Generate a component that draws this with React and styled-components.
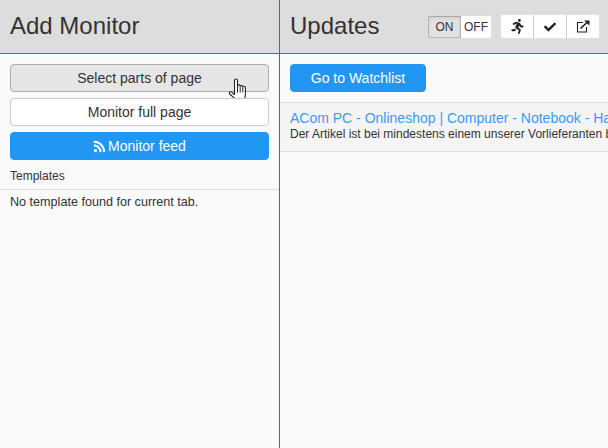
import React from 'react';
import styled, { createGlobalStyle } from 'styled-components';
import { FaRss, FaRunning, FaCheck } from 'react-icons/fa';

const GlobalStyle = createGlobalStyle`
	html, body {
		margin: 0;
		padding: 0;
		height: 100%;
		overflow: hidden;
		background: #fafafa;
		font-family: 'Liberation Sans', Arial, sans-serif;
		color: #333;
	}
`;

const Page = styled.div`
	display: flex;
	width: 608px;
	height: 448px;
	background: #fafafa;
`;

const LeftColumn = styled.div`
	width: 279px;
	flex: none;
	border-right: 1px solid #666;
`;

const RightColumn = styled.div`
	flex: 1;
	min-width: 0;
	overflow: hidden;
`;

const Header = styled.div`
	display: flex;
	align-items: center;
	height: 54px;
	box-sizing: border-box;
	padding: 0 8px 0 10px;
	background: #ddd;
	border-bottom: 1px solid #1f7fd0;
`;

const Title = styled.h1`
	margin: 0 0 2px;
	font-size: 24px;
	font-weight: 400;
	flex: 1;
`;

const Actions = styled.div`
	display: flex;
	flex-direction: column;
	gap: 6px;
	padding: 10px 10px 0;
`;

const Button = styled.div`
	position: relative;
	display: flex;
	align-items: center;
	justify-content: center;
	gap: 2px;
	height: 28px;
	box-sizing: border-box;
	width: ${(p) => p.$width || 'auto'};
	font-size: 14px;
	border-radius: 4px;
	border: 1px solid ${(p) => (p.$kind === 'primary' ? '#2196f3' : p.$kind === 'active' ? '#adadad' : '#ccc')};
	background: ${(p) => (p.$kind === 'primary' ? '#2196f3' : p.$kind === 'active' ? '#e6e6e6' : '#fff')};
	color: ${(p) => (p.$kind === 'primary' ? '#fff' : '#333')};
`;

const Cursor = styled.svg`
	position: absolute;
	left: 217px;
	top: 13px;
`;

const SectionLabel = styled.div`
	font-size: 12px;
	line-height: 14px;
	padding: 9px 10px 6px;
	border-bottom: 1px solid #ddd;
`;

const Empty = styled.div`
	font-size: 12.6px;
	line-height: 14px;
	padding: 5px 10px;
`;

const Toggle = styled.div`
	display: flex;
	height: 22px;
	margin-right: 8px;
	font-size: 12px;
	border: 1px solid #e0e0e0;
	border-radius: 3px;
	overflow: hidden;
	background: #fff;
`;

const ToggleItem = styled.div`
	display: flex;
	align-items: center;
	justify-content: center;
	width: ${(p) => p.$width}px;
	background: ${(p) => (p.$on ? '#e2e2e2' : '#fff')};
	box-shadow: ${(p) => (p.$on ? 'inset 0 2px 4px rgba(0,0,0,.1), inset 0 0 0 1px #b8b8b8' : 'none')};
`;

const IconGroup = styled.div`
	display: flex;
	height: 23px;
	border: 1px solid #e0e0e0;
	border-radius: 3px;
	background: #fff;
`;

const IconButton = styled.div`
	display: flex;
	align-items: center;
	justify-content: center;
	width: 32px;
	color: #222;
	font-size: 12px;

	& + & {
		border-left: 1px solid #ccc;
	}
`;

const WatchlistBar = styled.div`
	padding: 10px;
`;

const UpdateRow = styled.div`
	height: 50px;
	box-sizing: border-box;
	padding: 7px 0 0 10px;
	background: #f5f5f5;
	border-top: 1px solid #ddd;
	border-bottom: 1px solid #ddd;
	white-space: nowrap;
	overflow: hidden;
`;

const UpdateTitle = styled.div`
	font-size: 14px;
	line-height: 16px;
	color: #3b99fc;
`;

const UpdateText = styled.div`
	font-size: 12px;
	line-height: 14px;
	margin-top: 1px;
`;

const HandCursor = () => (
	<Cursor width="20" height="26" viewBox="0 0 20 26">
		<path
			d="M6.5 2.5c0-2 3-2 3 0v5.2c.4-1.2 2.5-1 2.7.3.5-.9 2.3-.7 2.5.6.6-.6 2.6-.5 2.7 1.2v6.7c0 1.8-.4 3.2-1.1 4.5-.3.7-.6 1.4-.6 2.5H8.6c-.5-1.6-1.5-2.6-2.7-3.8L1.6 16c-1-1.2.6-3 2-1.9l2.9 2.4z"
			fill="#fff"
			stroke="#222"
			strokeWidth="1.1"
			strokeLinejoin="round"
		/>
		<path d="M9.5 8v6.5M12.2 8v6.5M14.8 9v5.5" stroke="#222" strokeWidth="1" fill="none" />
	</Cursor>
);

const ExternalIcon = () => (
	<svg width="14" height="13" viewBox="0 0 14 13" fill="none">
		<path d="M7 2.5H1.5v9.5h9V7" stroke="#222" strokeWidth="1.1" />
		<path d="M4.5 8.5 11 2.5" stroke="#222" strokeWidth="1.7" />
		<path d="M8 0.5H13.5V5.5z" fill="#222" />
	</svg>
);

const App = () => {
	return (
		<>
			<GlobalStyle />
			<Page>
				<LeftColumn>
					<Header>
						<Title>Add Monitor</Title>
					</Header>
					<Actions>
						<Button $kind="active">
							Select parts of page
							<HandCursor />
						</Button>
						<Button>Monitor full page</Button>
						<Button $kind="primary">
							<FaRss size={13} />
							Monitor feed
						</Button>
					</Actions>
					<SectionLabel>Templates</SectionLabel>
					<Empty>No template found for current tab.</Empty>
				</LeftColumn>
				<RightColumn>
					<Header>
						<Title>Updates</Title>
						<Toggle>
							<ToggleItem $on $width={33}>ON</ToggleItem>
							<ToggleItem $width={30}>OFF</ToggleItem>
						</Toggle>
						<IconGroup>
							<IconButton><FaRunning size={15} /></IconButton>
							<IconButton><FaCheck size={12} /></IconButton>
							<IconButton><ExternalIcon /></IconButton>
						</IconGroup>
					</Header>
					<WatchlistBar>
						<Button $kind="primary" $width="136px">Go to Watchlist</Button>
					</WatchlistBar>
					<UpdateRow>
						<UpdateTitle>ACom PC - Onlineshop | Computer - Notebook - Ha</UpdateTitle>
						<UpdateText>Der Artikel ist bei mindestens einem unserer Vorlieferanten b</UpdateText>
					</UpdateRow>
				</RightColumn>
			</Page>
		</>
	);
};

export default App;
